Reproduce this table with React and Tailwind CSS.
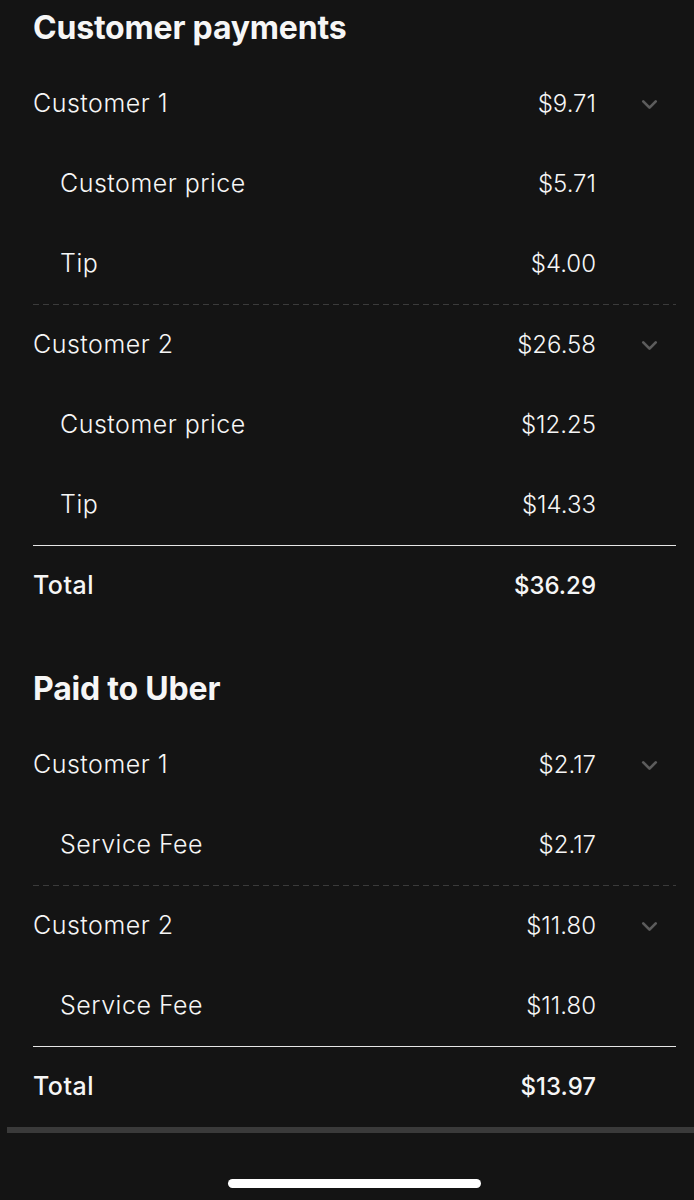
import { ChevronDown } from "lucide-react";

const sections = [
  {
    title: "Customer payments",
    groups: [
      {
        name: "Customer 1",
        amount: "$9.71",
        items: [
          ["Customer price", "$5.71"],
          ["Tip", "$4.00"],
        ],
      },
      {
        name: "Customer 2",
        amount: "$26.58",
        items: [
          ["Customer price", "$12.25"],
          ["Tip", "$14.33"],
        ],
      },
    ],
    total: "$36.29",
  },
  {
    title: "Paid to Uber",
    groups: [
      { name: "Customer 1", amount: "$2.17", items: [["Service Fee", "$2.17"]] },
      { name: "Customer 2", amount: "$11.80", items: [["Service Fee", "$11.80"]] },
    ],
    total: "$13.97",
  },
];

function Row({ label, amount, indent, chevron, strong }) {
  return (
    <div className="flex h-[80px] items-center">
      <span
        className={`flex-1 text-[25px] tracking-[0.5px] ${indent ? "pl-[27px]" : ""} ${
          strong ? "font-medium" : "font-light"
        }`}
      >
        {label}
      </span>
      <span className={`text-[24px] ${strong ? "font-medium" : "font-light"}`}>{amount}</span>
      <span className="flex w-[80px] justify-end pr-[14px]">
        {chevron && <ChevronDown size={25} strokeWidth={2.6} className="text-[#5c5c5c]" />}
      </span>
    </div>
  );
}

export default function App() {
  return (
    <div
      className="relative h-[1200px] w-[694px] overflow-hidden bg-[#141414] text-[#f6f6f6]"
      style={{ fontFamily: "Inter, 'Liberation Sans', sans-serif" }}
    >
      <div className="pl-[33px] pr-[18px]">
        {sections.map((s, si) => (
          <div key={s.title} className={si > 0 ? "mt-[35px]" : ""}>
            <div className="mb-[8px] flex h-[56px] items-center text-[32px] font-bold tracking-[-0.2px]">
              {s.title}
            </div>
            {s.groups.map((g, gi) => (
              <div key={g.name}>
                {gi > 0 && (
                  <div className="h-px bg-[repeating-linear-gradient(to_right,#3b3b3b_0_6px,transparent_6px_10px)]" />
                )}
                <Row label={g.name} amount={g.amount} chevron />
                {g.items.map(([l, a]) => (
                  <Row key={l} label={l} amount={a} indent />
                ))}
              </div>
            ))}
            <div className="h-px bg-[#e6e6e6]" />
            <Row label="Total" amount={s.total} strong />
          </div>
        ))}
      </div>
      <div className="ml-[7px] h-[6px] bg-[#3a3a3a]" />
      <div className="mt-[46px] flex justify-center pl-[14px]">
        <div className="h-[9px] w-[253px] rounded-full bg-white" />
      </div>
    </div>
  );
}
